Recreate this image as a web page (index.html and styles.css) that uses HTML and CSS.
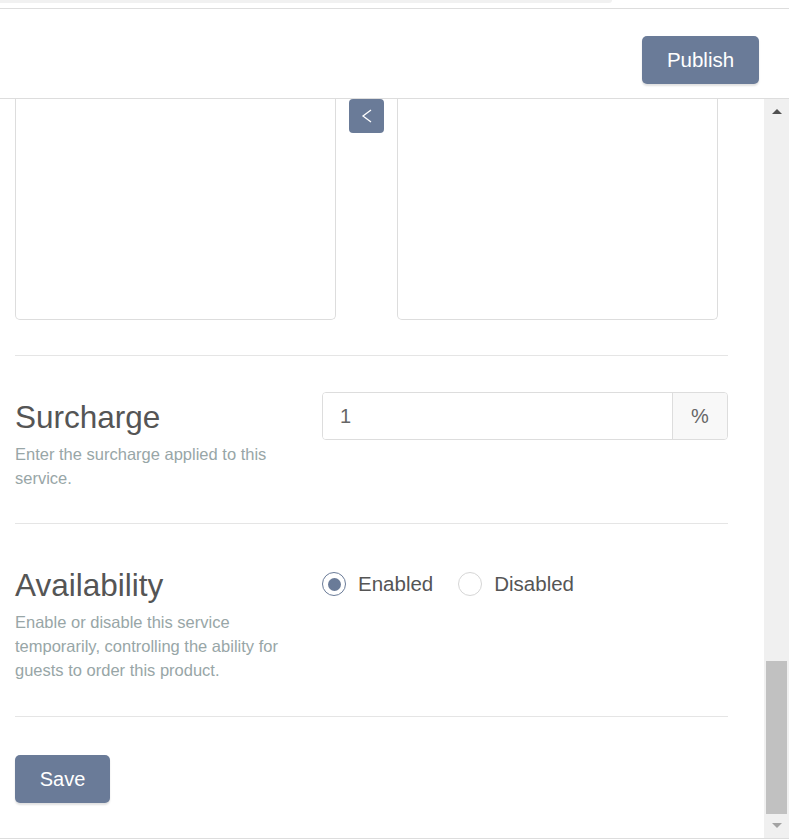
FILE: index.html
```html
<!DOCTYPE html>
<html lang="en">
  <head>
    <meta charset="utf-8" />
    <title>Service settings</title>
    <link rel="stylesheet" href="styles.css">
  </head>
  <body>
    <div class="top-strip"><div class="top-tab"></div></div>

    <header class="toolbar">
      <button class="btn btn-publish">Publish</button>
    </header>

    <div class="panel">
      <div class="panel-body">
        <section class="lists">
          <div class="list-box"></div>
          <button class="move-btn" aria-label="Move left">
            <svg width="12" height="16" viewBox="0 0 12 16"><polyline points="10,2 2,8 10,14" fill="none" stroke="#fff" stroke-width="1.3"/></svg>
          </button>
          <div class="list-box"></div>
        </section>

        <section class="field">
          <div class="field-info">
            <h2>Surcharge</h2>
            <p>Enter the surcharge applied to this service.</p>
          </div>
          <div class="input-group">
            <input type="text" value="1">
            <span class="addon">%</span>
          </div>
        </section>

        <section class="field field-last">
          <div class="field-info">
            <h2>Availability</h2>
            <p>Enable or disable this service temporarily, controlling the ability for guests to order this product.</p>
          </div>
          <div class="radios">
            <label class="radio"><span class="dot checked"></span>Enabled</label>
            <label class="radio"><span class="dot"></span>Disabled</label>
          </div>
        </section>

        <div class="actions">
          <button class="btn">Save</button>
        </div>
      </div>

      <div class="scrollbar">
        <span class="arrow up"></span>
        <div class="track"><div class="thumb"></div></div>
        <span class="arrow down"></span>
      </div>
    </div>
  </body>
</html>
```

FILE: styles.css
```css
body {
  margin: 0;
  font-family: "Liberation Sans", Arial, sans-serif;
  background: #fff;
  color: #555;
}

.top-strip {
  height: 8px;
  border-bottom: 1px solid #ddd;
}

.top-tab {
  width: 612px;
  height: 3px;
  background: #f1f1f1;
  border-bottom-right-radius: 6px;
}

.toolbar {
  height: 90px;
  box-sizing: border-box;
  padding: 27px 30px 0 0;
  display: flex;
  justify-content: flex-end;
  align-items: flex-start;
  border-bottom: 1px solid #ddd;
}

.btn {
  height: 48px;
  padding: 0 24px;
  font-family: inherit;
  font-size: 20px;
  color: #fff;
  background: #6a7b98;
  border: none;
  border-radius: 5px;
  box-shadow: 0 2px 2px rgba(0,0,0,0.12);
  cursor: pointer;
}

.btn-publish {
  width: 117px;
  padding: 0;
  font-size: 20.5px;
}

.panel {
  height: 739px;
  display: flex;
  border-bottom: 1px solid #ddd;
}

.panel-body {
  flex: 1;
  padding: 0 36px 0 15px;
}

.lists {
  display: flex;
  align-items: flex-start;
  gap: 13px;
  padding-bottom: 35px;
  border-bottom: 1px solid #e5e5e5;
}

.list-box {
  width: 321px;
  height: 221px;
  box-sizing: border-box;
  border: 1px solid #ddd;
  border-top: none;
  border-radius: 0 0 5px 5px;
}

.move-btn {
  width: 35px;
  height: 34px;
  padding: 0;
  background: #6a7b98;
  border: none;
  border-radius: 4px;
  display: flex;
  align-items: center;
  justify-content: center;
}

.field {
  display: grid;
  grid-template-columns: 288px 1fr;
  column-gap: 19px;
  align-items: start;
  padding: 36px 0 33px;
  border-bottom: 1px solid #e5e5e5;
}

.field-last {
  padding-bottom: 34px;
}

.field-info h2 {
  margin: 8px 0 8px;
  font-size: 31.5px;
  line-height: 34px;
  font-weight: normal;
  color: #555;
}

.field-info p {
  margin: 0;
  font-size: 16.5px;
  line-height: 24px;
  color: #98a6a7;
}

.input-group {
  display: flex;
  height: 48px;
  box-sizing: border-box;
  border: 1px solid #ddd;
  border-radius: 4px;
  overflow: hidden;
}

.input-group input {
  flex: 1;
  min-width: 0;
  border: none;
  outline: none;
  padding: 0 17px;
  font-family: inherit;
  font-size: 20px;
  color: #666;
}

.addon {
  width: 54px;
  display: flex;
  align-items: center;
  justify-content: center;
  background: #f8f8f8;
  border-left: 1px solid #ddd;
  font-size: 20px;
  color: #666;
}

.radios {
  height: 48px;
  display: flex;
  align-items: center;
  gap: 25px;
}

.radio {
  display: flex;
  align-items: center;
  gap: 12px;
  font-size: 20.5px;
  color: #555;
}

.dot {
  width: 24px;
  height: 24px;
  box-sizing: border-box;
  border: 1px solid #d6d6d6;
  border-radius: 50%;
  display: flex;
  align-items: center;
  justify-content: center;
}

.dot.checked {
  border-color: #6a7b98;
}

.dot.checked::after {
  content: "";
  width: 13px;
  height: 13px;
  border-radius: 50%;
  background: #6a7b98;
}

.actions {
  padding-top: 38px;
}

.actions .btn {
  width: 95px;
  padding: 0;
}

.scrollbar {
  width: 25px;
  background: #f0f0f0;
  display: flex;
  flex-direction: column;
  align-items: center;
}

.arrow {
  width: 0;
  height: 0;
  border-left: 5px solid transparent;
  border-right: 5px solid transparent;
}

.arrow.up {
  margin-top: 10px;
  border-bottom: 5px solid #505050;
}

.arrow.down {
  margin: 9px 0 10px;
  border-top: 5px solid #a3a3a3;
}

.track {
  flex: 1;
  width: 100%;
  display: flex;
  flex-direction: column;
  justify-content: flex-end;
  align-items: center;
}

.thumb {
  width: 21px;
  height: 153px;
  background: #c1c1c1;
}
```
